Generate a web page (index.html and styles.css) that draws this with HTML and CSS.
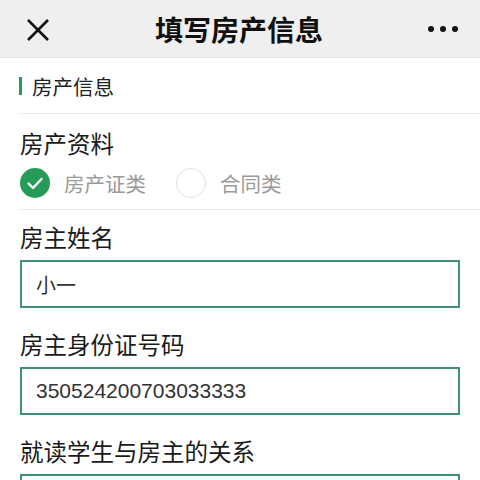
FILE: index.html
```html
<!DOCTYPE html>
<html lang="zh-CN">
<head>
<meta charset="utf-8">
<title>填写房产信息</title>
<link rel="stylesheet" href="styles.css">
</head>
<body>
<header class="nav">
  <span class="nav-close">
    <svg width="24" height="24" viewBox="0 0 24 24"><path d="M2 2 L22 22 M22 2 L2 22" stroke="#111" stroke-width="2.6" fill="none"/></svg>
  </span>
  <h1 class="nav-title">填写房产信息</h1>
  <span class="nav-more"><i></i><i></i><i></i></span>
</header>
<main class="page">
  <div class="section-head"><span class="bar"></span><span>房产信息</span></div>
  <div class="group">
    <div class="label">房产资料</div>
    <div class="radios">
      <label class="radio">
        <span class="radio-icon checked">
          <svg width="30" height="30" viewBox="0 0 30 30"><circle cx="15" cy="15" r="15" fill="#259b57"/><path d="M8.5 15.5 L13 20 L21.5 11" stroke="#fff" stroke-width="2.4" fill="none" stroke-linecap="round" stroke-linejoin="round"/></svg>
        </span>
        <span class="radio-text">房产证类</span>
      </label>
      <label class="radio">
        <span class="radio-icon empty"></span>
        <span class="radio-text">合同类</span>
      </label>
    </div>
  </div>
  <div class="field">
    <div class="label">房主姓名</div>
    <div class="input">小一</div>
  </div>
  <div class="field">
    <div class="label">房主身份证号码</div>
    <div class="input num">350524200703033333</div>
  </div>
  <div class="field">
    <div class="label">就读学生与房主的关系</div>
    <div class="input"></div>
  </div>
</main>
</body>
</html>
```
FILE: styles.css
```css
* { box-sizing: border-box; }
html, body { margin: 0; padding: 0; }
body {
  background: #fff;
  color: #1a1a1a;
  font-family: "Noto Sans CJK SC", "Noto Sans", sans-serif;
  width: 480px;
  overflow: hidden;
}
.nav {
  height: 58px;
  background: #efefef;
  border-bottom: 1px solid #e4e4e4;
  display: flex;
  align-items: center;
  justify-content: space-between;
  padding: 0 22px 0 26px;
}
.nav-close { width: 24px; height: 24px; display: flex; margin-top: 2px; }
.nav-title {
  margin: 0;
  font-size: 28px;
  font-weight: 700;
  color: #111;
  line-height: 1;
}
.nav-more { display: flex; gap: 6px; width: 30px; }
.nav-more i {
  display: block;
  width: 6px;
  height: 6px;
  border-radius: 50%;
  background: #111;
}
.section-head {
  height: 56px;
  display: flex;
  align-items: center;
  margin-left: 19px;
  font-size: 20.5px;
  color: #222;
  border-bottom: 1px solid #ececec;
}
.section-head .bar {
  width: 3px;
  height: 18px;
  background: #259b57;
  margin-right: 10px;
}
.group {
  margin-left: 20px;
  padding: 11px 0 11px;
  border-bottom: 1px solid #ececec;
}
.label {
  font-size: 23.5px;
  line-height: 36px;
  color: #1a1a1a;
  white-space: nowrap;
}
.radios {
  display: flex;
  align-items: center;
  margin-top: 7px;
  height: 30px;
}
.radio { display: flex; align-items: center; margin-right: 30px; }
.radio-icon { width: 30px; height: 30px; display: flex; }
.radio-icon.empty {
  border: 1.5px solid #e0e0e0;
  border-radius: 50%;
}
.radio-text {
  font-size: 20.5px;
  color: #9a9a9a;
  margin-left: 14px;
  line-height: 30px;
}
.field {
  padding: 9px 20px 10px;
}
.field + .field { padding-top: 8px; }
.input {
  margin-top: 5px;
  height: 48px;
  border: 2px solid #3f9270;
  padding-left: 14px;
  display: flex;
  align-items: center;
  font-size: 20px;
  color: #333;
}
.input.num {
  font-family: "Liberation Sans", "Noto Sans", sans-serif;
  font-size: 21px;
}
```
